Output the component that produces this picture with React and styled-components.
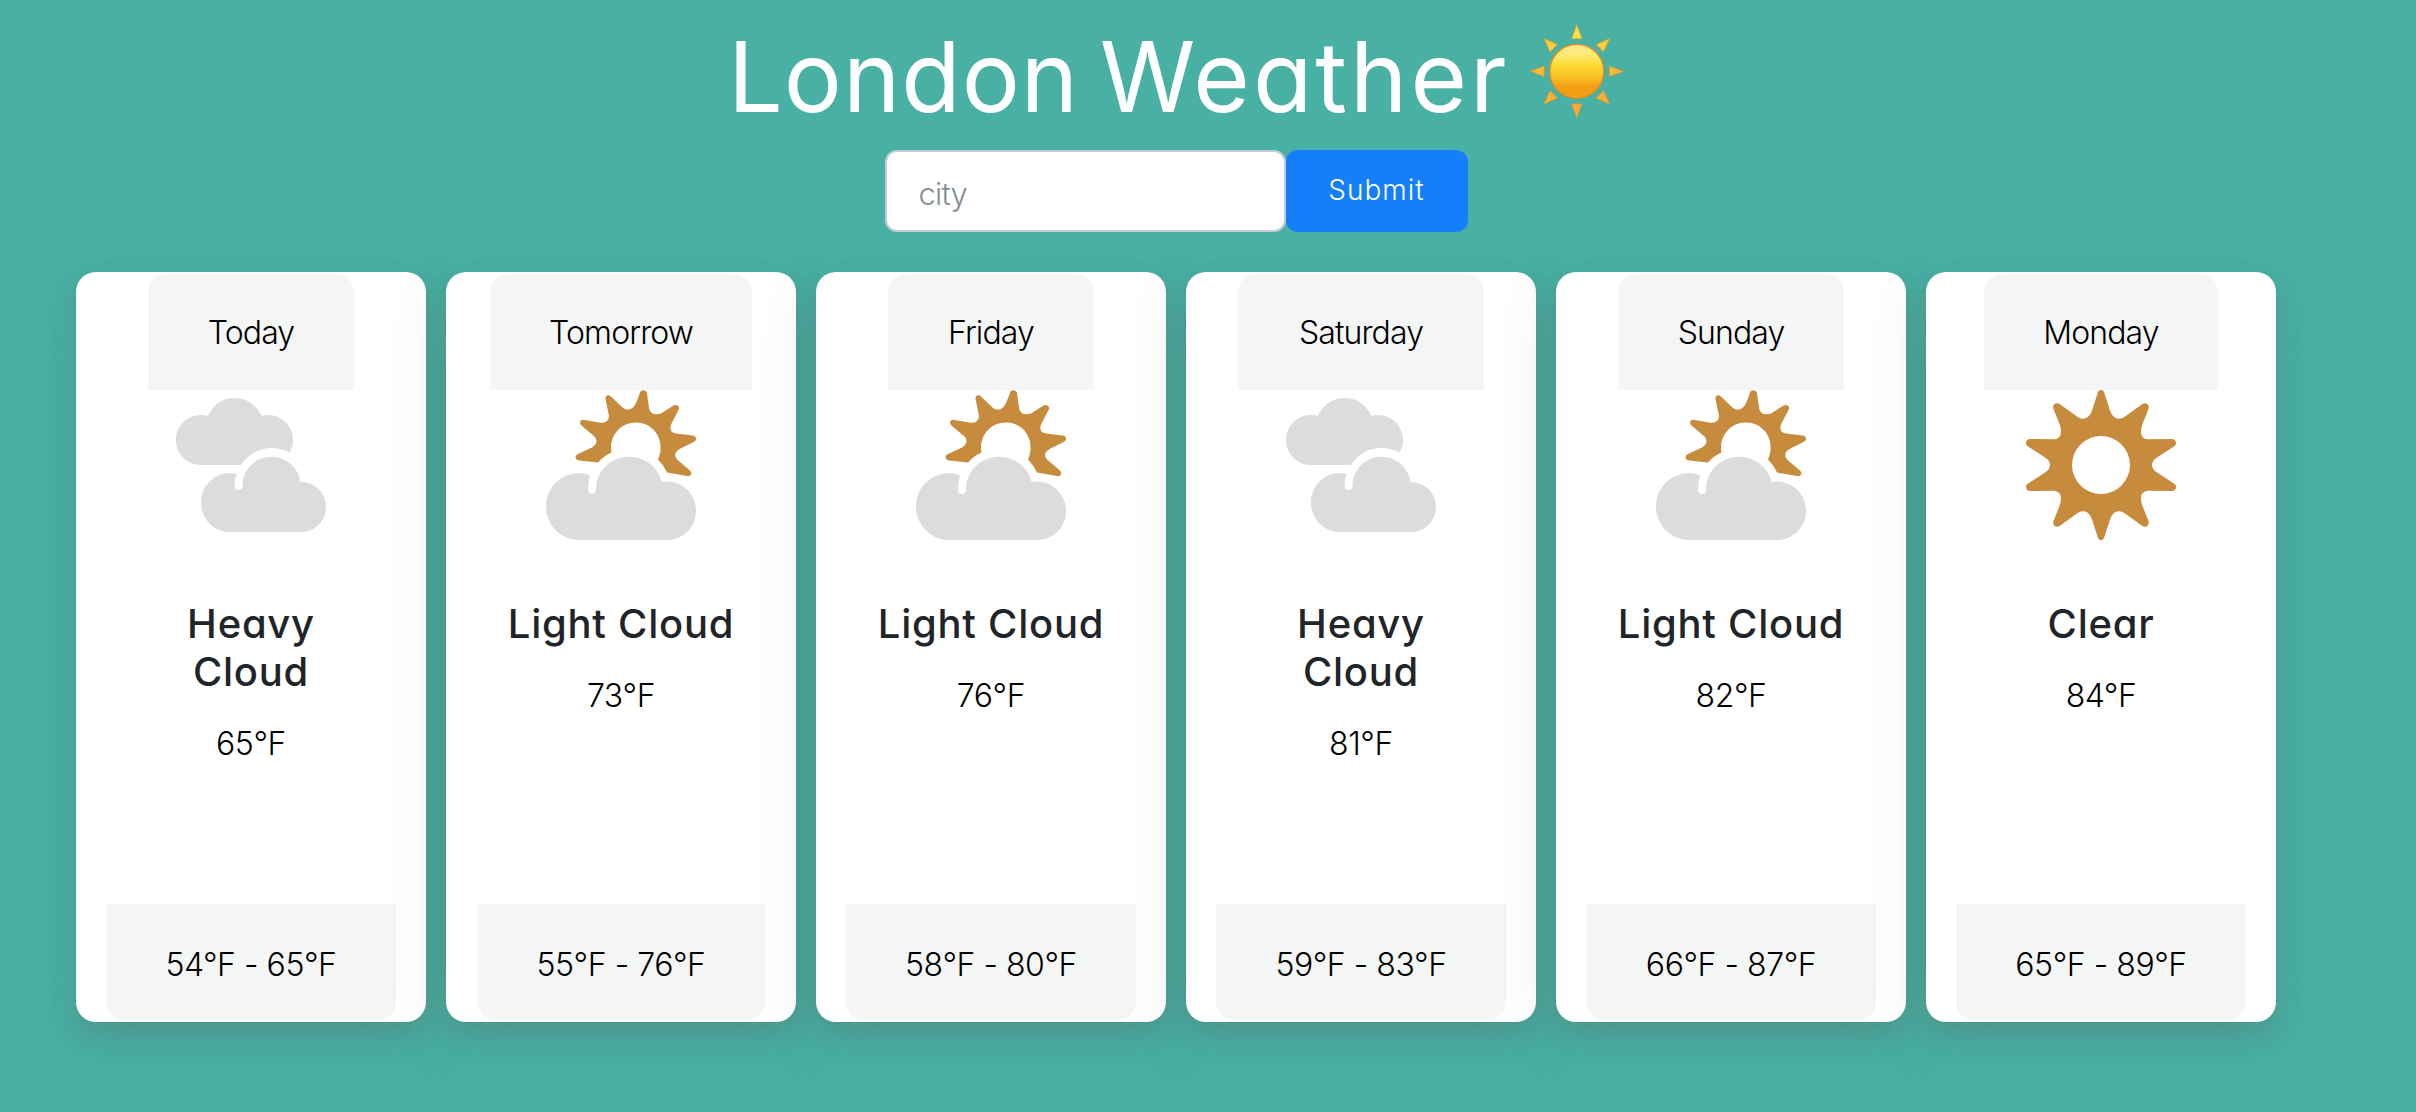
import React from "react";
import styled, { createGlobalStyle } from "styled-components";

const Global = createGlobalStyle`
  * { box-sizing: border-box; }
  body {
    margin: 0;
    min-height: 100vh;
    background: #48b1a4;
    font-family: Inter, Roboto, sans-serif;
    font-weight: 300;
    overflow: hidden;
  }
`;

const Page = styled.main`
  width: 2352px;
  height: 1112px;
  display: flex;
  flex-direction: column;
  align-items: center;
`;

const Title = styled.h1`
  margin: 22px 0 0;
  width: 896px;
  height: 108px;
  display: flex;
  justify-content: space-between;
  color: #fff;
  font-size: 97px;
  font-weight: 400;
  line-height: 110px;
  font-feature-settings: "cv11";
  white-space: nowrap;
`;

const Word = styled.span`
  letter-spacing: ${(p) => p.$tracking}px;
`;

const SunEmoji = styled.svg`
  width: 94px;
  height: 98px;
`;

const Form = styled.form`
  margin: 20px 0 0;
  display: flex;
`;

const CityInput = styled.input`
  width: 401px;
  height: 82px;
  padding: 4px 32px 0;
  border: 2px solid #c3ccd8;
  border-radius: 12px;
  background: #fff;
  font: 300 31px Inter, sans-serif;
  letter-spacing: -0.8px;
  outline: none;
  &::placeholder { color: #868e96; opacity: 1; }
`;

const Submit = styled.button`
  width: 182px;
  height: 82px;
  padding: 0 0 2px;
  border: 0;
  border-radius: 12px;
  background: #157efb;
  color: #fff;
  font: 300 28px Inter, sans-serif;
  letter-spacing: 1px;
  font-feature-settings: "cv11";
`;

const Deck = styled.section`
  margin-top: 40px;
  display: flex;
  gap: 20px;
`;

const Card = styled.article`
  width: 350px;
  height: 750px;
  padding: 2px 0;
  display: flex;
  flex-direction: column;
  align-items: center;
  border-radius: 20px;
  background: #fff;
  box-shadow: 0 20px 60px rgba(90, 85, 85, 0.15), 0 12px 26px rgba(100, 75, 80, 0.18);
`;

const Strip = styled.div`
  width: ${(p) => p.$w}px;
  flex: none;
  display: flex;
  justify-content: center;
  white-space: nowrap;
  background: #f4f6f6;
  color: #000;
  font-size: 32px;
  line-height: 48px;
`;

const CardHeader = styled(Strip)`
  height: 116px;
  padding-top: 35px;
  border-radius: 18px 18px 0 0;
  letter-spacing: -0.9px;
`;

const CardFooter = styled(Strip)`
  height: 116px;
  padding-top: 37px;
  border-radius: 0 0 18px 18px;
  letter-spacing: -0.45px;
`;

const Icon = styled.svg`
  width: 150px;
  height: 150px;
  flex: none;
`;

const Body = styled.div`
  flex: 1;
  width: 270px;
  padding-top: 60px;
  text-align: center;
`;

const Condition = styled.h2`
  margin: 0;
  padding: 0 ${(p) => (p.$narrow ? 60 : 0)}px;
  color: #212529;
  font-size: 40px;
  font-weight: 500;
  line-height: 48px;
  letter-spacing: 0.75px;
  font-feature-settings: "cv11";
`;

const Temp = styled.p`
  margin: 24px 0 0;
  color: #000;
  font-size: 32px;
  line-height: 48px;
  letter-spacing: -0.4px;
`;

const GOLD = "#c68b3c";
const GREY = "#dcdcdc";

function HeavyCloud() {
  return (
    <Icon viewBox="0 0 150 150">
      <path
        fill={GREY}
        d="M25 75C11 75 0 64 0 50S11 25 25 25Q28.500 25 32 26C36.500 15.500 46 8 58.500 8S80.500 15.500 85.500 26Q89 25 92 25C106 25 117 36 117 50Q117 57 113.500 62.500Q105 58 95.500 58C82.500 58 71.500 64.500 65 75Z"
      />
      <path
        fill={GREY}
        d="M54 142C38 142 25 129 25 112.500S38 83 54 83Q57.500 83 60.500 84Q58.500 90 58.500 96A4 4 0 0 0 66.500 96C66.500 79.500 79.500 66.800 95.500 66.800C110 66.800 122.500 77.500 124.500 92C139 92 150 103 150 117S139 142 125 142Z"
      />
    </Icon>
  );
}

function LightCloud() {
  return (
    <Icon viewBox="0 0 150 150">
      <path
        fill={GOLD}
        d="M52 72.500L33 70.500C28.500 70 28.500 65.500 32 64L46 57.500Q53 53 49 47L35.500 35.500C32.500 32.500 34.500 29 38.500 30L53 32.500Q62.500 34 63 26L59.500 9C59 5 63 4 65.500 7L77 18Q83 22 88 16.500Q91 12 94 2.500C95 -.5 100 -.5 101 3L103 18Q105 26.500 115 23.500L127.500 15.500C131.500 13.500 134.500 17 132.500 20L125 34.500Q122.500 42 130 43.500L146.500 45.500C151 46 151 50.500 147.500 52L134.500 58.500Q126 63 131 69.500L144 80.500C147 83.500 144.500 87 141 86L121 82.500Q117.500 75 112 69.500C120 52 109 32.500 90 32.500C73 32.500 62.500 48 65.500 62.500Q57.500 66 52 72.500Z"
      />
      <path
        fill={GREY}
        d="M33 150C15 150 0 135 0 116.500S15 83 33 83Q39 83 44 85.500Q42 92 42 100A4 4 0 0 0 50 100C50 81 65 66.800 83 66.800C99 66.800 112.500 77.500 115.500 92Q118 91.600 121 91.600C137 91.600 150 104.500 150 121S137 150 121 150Z"
      />
    </Icon>
  );
}

const QUADRANT =
  "M75.300 0H75C73 0 71.900 1.300 71.500 3.500L66 20.500C64 26.500 60.500 28.700 56.800 28.700C54.500 28.700 52.500 27.800 50.600 26.300L34 14.300C30.500 11.500 25.800 14.500 27.500 19L33.300 33.500C34.600 37 35 39.500 34.900 42.700C34.700 47 31.500 49.300 26.700 49.300L4 49C0 49 -1.500 54 1.700 56.200L19.800 68C22.500 70 24 72.500 24 75V75.300H46V75A29 29 0 0 1 75 46H75.300Z";

function Clear() {
  return (
    <Icon viewBox="0 0 150 150" fill={GOLD}>
      <path d={QUADRANT} />
      <path d={QUADRANT} transform="matrix(-1 0 0 1 150 0)" />
      <path d={QUADRANT} transform="matrix(1 0 0 -1 0 150)" />
      <path d={QUADRANT} transform="matrix(-1 0 0 -1 150 150)" />
    </Icon>
  );
}

const RAYS = ["#fce145", "#fbcd3b", "#fab932", "#f9b133", "#faaa35", "#f9b133", "#fab932", "#fbcd3b"];

function Sun() {
  return (
    <SunEmoji viewBox="0 0 94 98">
      <defs>
        <linearGradient id="disc" x1="0" y1="0" x2="0" y2="1">
          <stop offset="0" stopColor="#fce98a" />
          <stop offset="0.18" stopColor="#fdea7a" />
          <stop offset="0.38" stopColor="#fddd33" />
          <stop offset="0.6" stopColor="#f9bf26" />
          <stop offset="0.8" stopColor="#f39f15" />
          <stop offset="1" stopColor="#f4a018" />
        </linearGradient>
      </defs>
      {RAYS.map((color, i) => (
        <path
          key={i}
          d="M46.800 2.800L52 16.700H41.600Z"
          fill={color}
          stroke="#dd9a35"
          strokeWidth="0.700"
          transform={`rotate(${i * 45} 46.800 49.300)`}
        />
      ))}
      <circle cx="46.800" cy="49.300" r="27" fill="url(#disc)" stroke="#e48a20" strokeWidth="1.300" />
    </SunEmoji>
  );
}

const ICONS = { heavy: HeavyCloud, light: LightCloud, clear: Clear };

const DAYS = [
  { day: "Today", hw: 206, fw: 290, icon: "heavy", text: "Heavy Cloud", temp: "65°F", range: "54°F - 65°F" },
  { day: "Tomorrow", hw: 262, fw: 287, icon: "light", text: "Light Cloud", temp: "73°F", range: "55°F - 76°F" },
  { day: "Friday", hw: 206, fw: 290, icon: "light", text: "Light Cloud", temp: "76°F", range: "58°F - 80°F" },
  { day: "Saturday", hw: 246, fw: 290, icon: "heavy", text: "Heavy Cloud", temp: "81°F", range: "59°F - 83°F" },
  { day: "Sunday", hw: 226, fw: 290, icon: "light", text: "Light Cloud", temp: "82°F", range: "66°F - 87°F" },
  { day: "Monday", hw: 234, fw: 290, icon: "clear", text: "Clear", temp: "84°F", range: "65°F - 89°F" },
];

export default function App() {
  return (
    <>
      <Global />
      <Page>
        <Title>
          <Word $tracking={1}>London</Word>
          <Word $tracking={3}>Weather</Word>
          <Sun />
        </Title>
        <Form>
          <CityInput placeholder="city" />
          <Submit type="button">Submit</Submit>
        </Form>
        <Deck>
          {DAYS.map((d) => {
            const Glyph = ICONS[d.icon];
            return (
              <Card key={d.day}>
                <CardHeader $w={d.hw}>{d.day}</CardHeader>
                <Glyph />
                <Body>
                  <Condition $narrow={d.icon === "heavy"}>{d.text}</Condition>
                  <Temp>{d.temp}</Temp>
                </Body>
                <CardFooter $w={d.fw}>{d.range}</CardFooter>
              </Card>
            );
          })}
        </Deck>
      </Page>
    </>
  );
}
